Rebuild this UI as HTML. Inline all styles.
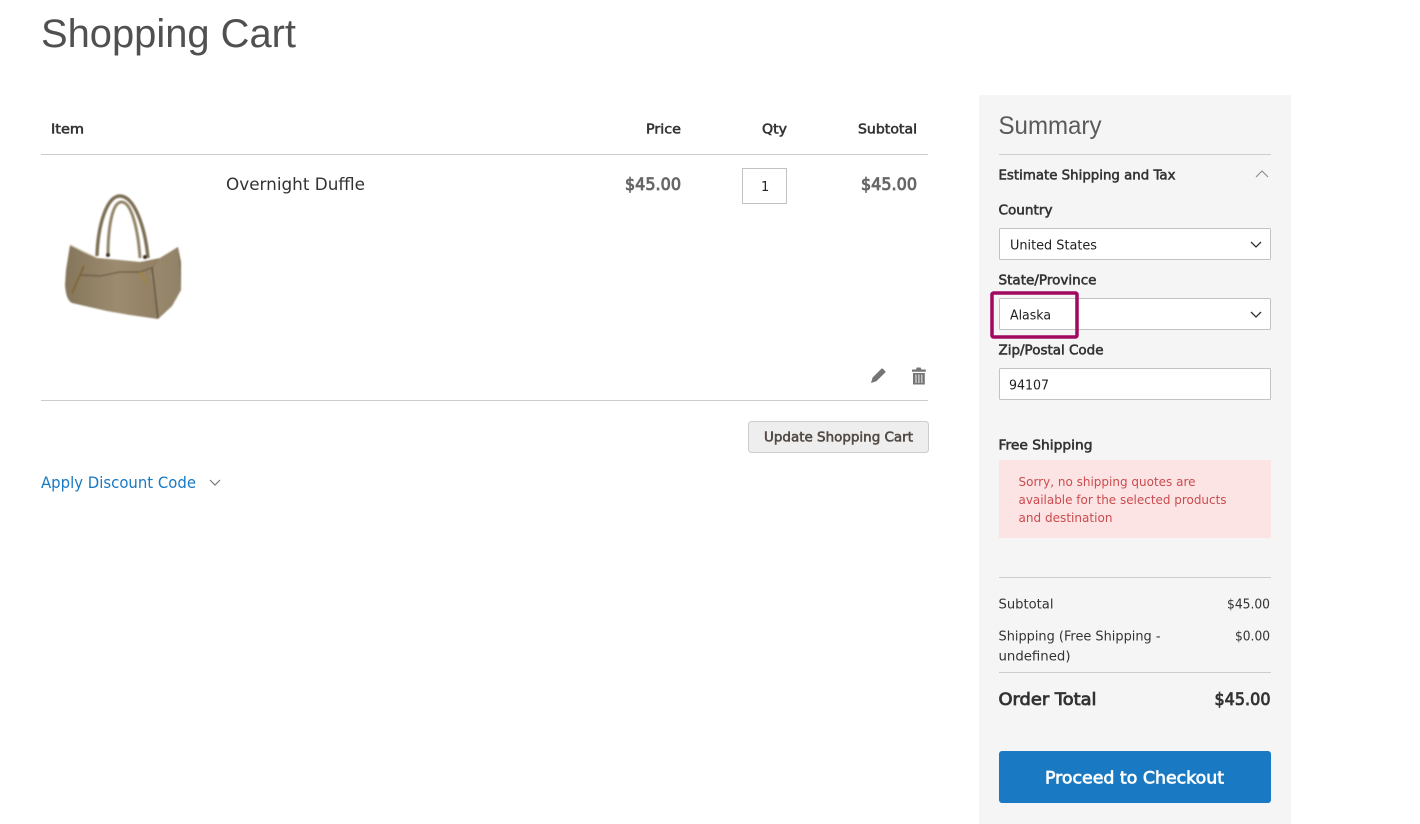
<!DOCTYPE html>
<html><head><meta charset="utf-8"><title>Shopping Cart</title>
<style>
html,body{margin:0;padding:0;background:#fff;width:1420px;height:824px;overflow:hidden}
svg{display:block}
text{font-family:"DejaVu Sans","Liberation Sans",sans-serif;font-size:13px;fill:#333}
.b{stroke:#333;stroke-width:.55}
</style></head><body>
<svg width="1420" height="824" viewBox="0 0 1420 824" xmlns="http://www.w3.org/2000/svg">
<defs>
<filter id="bl" x="-10%" y="-10%" width="120%" height="120%"><feGaussianBlur stdDeviation="0.9"/></filter>
<linearGradient id="bag" x1="0" y1="0" x2="1" y2="0"><stop offset="0" stop-color="#85755a"/><stop offset=".45" stop-color="#9c8b6f"/><stop offset=".8" stop-color="#927f63"/><stop offset="1" stop-color="#7d6d52"/></linearGradient>
</defs>
<text x="41" y="47" style="font-family:'Liberation Sans',sans-serif;font-size:40px;fill:#505050" textLength="255" lengthAdjust="spacingAndGlyphs">Shopping Cart</text>

<text class="b" x="51" y="133.500" textLength="33" lengthAdjust="spacingAndGlyphs">Item</text>
<text class="b" x="646" y="133.500" textLength="35" lengthAdjust="spacingAndGlyphs">Price</text>
<text class="b" x="762" y="133.500" textLength="25" lengthAdjust="spacingAndGlyphs">Qty</text>
<text class="b" x="858" y="133.500" textLength="59" lengthAdjust="spacingAndGlyphs">Subtotal</text>
<rect x="41" y="154" width="887" height="1" fill="#ccc"/>

<g filter="url(#bl)">
<path d="M108 256C108 228 112 203 121 202C131 201 138 228 140 258" fill="none" stroke="#93866a" stroke-width="3"/>
<path d="M97 256C98 224 107 196 120 196C134 196 145 226 148 258" fill="none" stroke="#7d6f54" stroke-width="3.400"/>
<path d="M70 245L84 252L97 258L120 260L140 262L160 258L178 247L181 262L181 290L172 306L158 319L130 315L107 311L72 303Q66 300 65 285L66 270Z" fill="url(#bag)"/>
<path d="M160 258L178 247L181 290L172 306L158 319L150 275Z" fill="#9a8b70" opacity=".7"/>
<path d="M80 275L100 276L120 272L140 272L151 268" fill="none" stroke="#6f5f47" stroke-width="1.400"/>
<path d="M84 266L72 293" stroke="#7f6530" stroke-width="1.800" fill="none"/>
<path d="M140 272L148 284" stroke="#a08538" stroke-width="1.800"/>
<path d="M152 267L158 318" stroke="#5f5040" stroke-width="1.500" fill="none"/>
<circle cx="108" cy="255" r="2" fill="#3e3024"/><circle cx="145" cy="257" r="2" fill="#3e3024"/>
<path d="M70 245L84 252L97 258" fill="none" stroke="#c5bba6" stroke-width="1"/>
</g>

<text x="226" y="190" style="font-size:17px" textLength="139" lengthAdjust="spacingAndGlyphs">Overnight Duffle</text>
<text x="625" y="190" style="font-size:17px;fill:#666;stroke:#666;stroke-width:.85" textLength="56" lengthAdjust="spacingAndGlyphs">$45.00</text>
<rect x="742.500" y="168.500" width="44" height="35" fill="#fff" stroke="#c2c2c2"/>
<text x="761" y="191" style="font-size:13px;fill:#222">1</text>
<text x="861" y="190" style="font-size:17px;fill:#666;stroke:#666;stroke-width:.85" textLength="56" lengthAdjust="spacingAndGlyphs">$45.00</text>

<path d="M871 383l1.600-5.500 8.800-8.800a1 1 0 0 1 1.400 0l2.400 2.400a1 1 0 0 1 0 1.400l-8.800 8.800z" fill="#757575"/>
<path d="M912 369.500h4l.8-2h3.800l.8 2h4.400v2.200h-13.800zM913 373h11.800v11.500h-11.800z" fill="#757575"/>
<path d="M916 374.500v8.500M918.900 374.500v8.500M921.800 374.500v8.500" stroke="#d8d8d8" stroke-width="1.200"/>
<rect x="41" y="400" width="887" height="1" fill="#ccc"/>

<rect x="748.500" y="421.500" width="180" height="31" rx="3" fill="#eee" stroke="#ccc"/>
<text x="764" y="441.500" style="fill:#514943;stroke:#514943;stroke-width:.55" textLength="149" lengthAdjust="spacingAndGlyphs">Update Shopping Cart</text>
<text x="41" y="488" style="font-size:16px;fill:#1979c3" textLength="155" lengthAdjust="spacingAndGlyphs">Apply Discount Code</text>
<path d="M210 480l5 5 5-5" fill="none" stroke="#777" stroke-width="1.200"/>

<rect x="979" y="95" width="312" height="729" fill="#f5f5f5"/>
<text x="998.500" y="134" style="font-family:'Liberation Sans',sans-serif;font-size:25px;fill:#5a5a5a" textLength="103" lengthAdjust="spacingAndGlyphs">Summary</text>
<rect x="999" y="154" width="272" height="1" fill="#ccc"/>
<text class="b" x="998.500" y="179.500" textLength="177" lengthAdjust="spacingAndGlyphs">Estimate Shipping and Tax</text>
<path d="M1256 177l6-6 6 6" fill="none" stroke="#888" stroke-width="1.100"/>
<text class="b" x="998.500" y="214.500" textLength="54" lengthAdjust="spacingAndGlyphs">Country</text>
<rect x="999.500" y="228.500" width="271" height="31" rx="1" fill="#fff" stroke="#c2c2c2"/>
<text x="1010" y="249.500" style="fill:#222" textLength="87" lengthAdjust="spacingAndGlyphs">United States</text>
<path d="M1251 242l5 5 5-5" fill="none" stroke="#333" stroke-width="1.300"/>
<text class="b" x="998.500" y="284.500" textLength="98" lengthAdjust="spacingAndGlyphs">State/Province</text>
<rect x="999.500" y="298.500" width="271" height="31" rx="1" fill="#fff" stroke="#c2c2c2"/>
<text x="1010" y="319.500" style="fill:#222" textLength="41" lengthAdjust="spacingAndGlyphs">Alaska</text>
<path d="M1251 312l5 5 5-5" fill="none" stroke="#333" stroke-width="1.300"/>
<rect x="992" y="293" width="85" height="44" rx="1.500" fill="none" stroke="#a1085f" stroke-width="3.500"/>
<text class="b" x="998.500" y="354.500" textLength="105" lengthAdjust="spacingAndGlyphs">Zip/Postal Code</text>
<rect x="999.500" y="368.500" width="271" height="31" rx="1" fill="#fff" stroke="#c2c2c2"/>
<text x="1009" y="389.500" style="fill:#222" textLength="40" lengthAdjust="spacingAndGlyphs">94107</text>

<text class="b" x="998.500" y="449.500" textLength="94" lengthAdjust="spacingAndGlyphs">Free Shipping</text>
<rect x="999" y="460" width="272" height="78" fill="#fce4e4"/>
<text x="1018.500" y="486" style="font-size:12.500px;fill:#cc4b4e" textLength="177" lengthAdjust="spacingAndGlyphs">Sorry, no shipping quotes are</text>
<text x="1018.500" y="504" style="font-size:12.500px;fill:#cc4b4e" textLength="208" lengthAdjust="spacingAndGlyphs">available for the selected products</text>
<text x="1018.500" y="522" style="font-size:12.500px;fill:#cc4b4e" textLength="94" lengthAdjust="spacingAndGlyphs">and destination</text>

<rect x="999" y="577" width="272" height="1" fill="#ccc"/>
<text x="998.500" y="608.500" textLength="55" lengthAdjust="spacingAndGlyphs">Subtotal</text>
<text x="1227" y="608.500" textLength="43" lengthAdjust="spacingAndGlyphs">$45.00</text>
<text x="998.500" y="640.500" textLength="162" lengthAdjust="spacingAndGlyphs">Shipping (Free Shipping -</text>
<text x="1235" y="640.500" textLength="35" lengthAdjust="spacingAndGlyphs">$0.00</text>
<text x="998.500" y="660.500" textLength="72" lengthAdjust="spacingAndGlyphs">undefined)</text>
<rect x="999" y="672" width="272" height="1" fill="#ccc"/>
<text class="b" x="998.500" y="705" style="font-size:17px;stroke-width:.8" textLength="98" lengthAdjust="spacingAndGlyphs">Order Total</text>
<text class="b" x="1214.500" y="705" style="font-size:17px;stroke-width:.8" textLength="56" lengthAdjust="spacingAndGlyphs">$45.00</text>

<rect x="999" y="751" width="272" height="52" rx="3" fill="#1979c3"/>
<text x="1045" y="783.500" style="font-size:17px;fill:#fff;stroke:#fff;stroke-width:.7" textLength="179" lengthAdjust="spacingAndGlyphs">Proceed to Checkout</text>
</svg>
</body></html>
